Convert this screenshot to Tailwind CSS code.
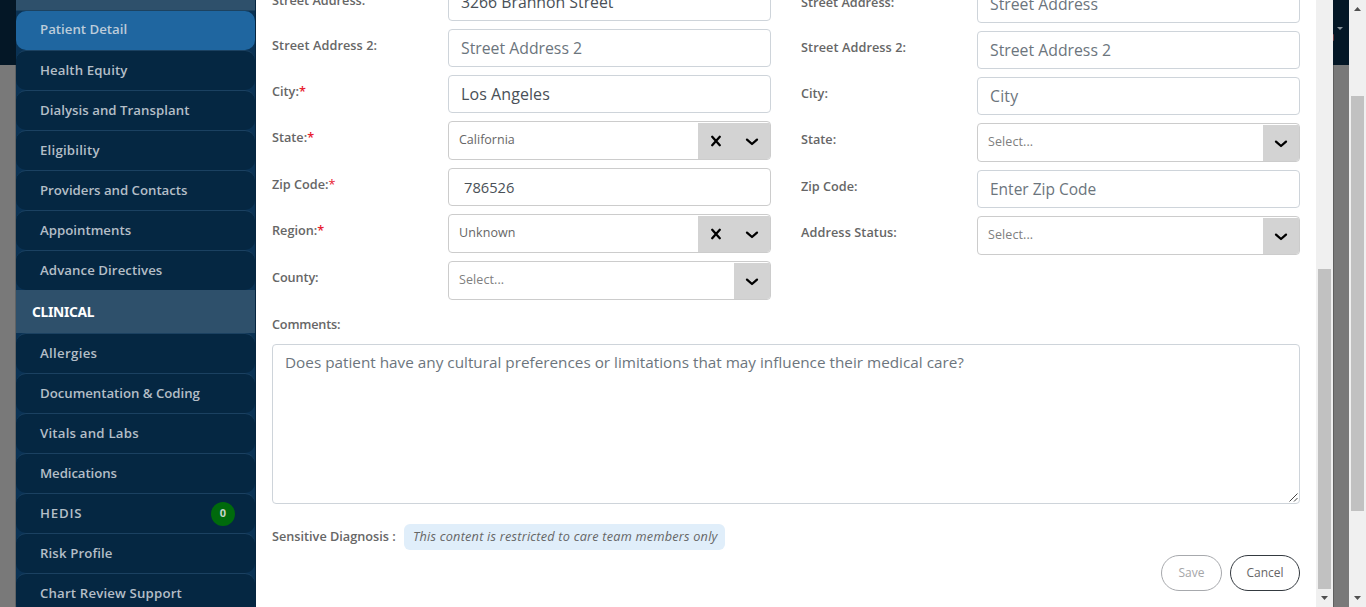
<!DOCTYPE html>
<html lang="en">
<head>
<meta charset="utf-8">
<title>Patient Detail</title>
<script src="https://cdn.jsdelivr.net/npm/@tailwindcss/browser@4"></script>
</head>
<body class="h-[607px] overflow-hidden bg-[#797979] font-['Open_Sans',sans-serif]">
<svg class="hidden">
  <symbol id="chev" viewBox="0 0 14 10"><path d="M2 2.6 7 7 12 2.6" fill="none" stroke="#000" stroke-width="2.3" stroke-linecap="round" stroke-linejoin="round"/></symbol>
  <symbol id="ex" viewBox="0 0 12 12"><path d="M2.2 1.8 9.8 10.2M9.8 1.8 2.2 10.2" fill="none" stroke="#000" stroke-width="2.3" stroke-linecap="round"/></symbol>
  <symbol id="up" viewBox="0 0 7 4"><path d="M0 4 3.5 0 7 4z" fill="#505050"/></symbol>
  <symbol id="down" viewBox="0 0 7 4"><path d="M0 0 3.5 4 7 0z" fill="#505050"/></symbol>
</svg>
<div class="flex h-[607px] w-[1366px]">
  <div class="w-4 shrink-0 border-r border-[#5f6264] bg-[#797979]"><div class="h-[65px] w-4 bg-[#041726]"></div></div>

  <nav class="h-full w-60 shrink-0 overflow-hidden border-r border-[#06253f] bg-[#0a3254] text-[13.25px] font-semibold text-[#b4bec7]">
    <div class="h-[10px] bg-[#2e506b]"></div>
    <div class="border-t border-[#1c4260]"><div class="flex h-[39px] items-center rounded-[10px] bg-[#1f66a0] pb-0.5 pl-6 text-[#bcccda]">Patient Detail</div></div>
    <div class="flex h-10 items-center rounded-[10px] border-t border-[#1b4161] bg-[#052742] pl-6 tracking-[0.1px]">Health Equity</div>
    <div class="flex h-10 items-center rounded-[10px] border-t border-[#1b4161] bg-[#052742] pl-6 tracking-[0.03px]">Dialysis and Transplant</div>
    <div class="flex h-10 items-center rounded-[10px] border-t border-[#1b4161] bg-[#052742] pl-6 tracking-[0.2px]">Eligibility</div>
    <div class="flex h-10 items-center rounded-[10px] border-t border-[#1b4161] bg-[#052742] pl-6 tracking-[-0.03px]">Providers and Contacts</div>
    <div class="flex h-10 items-center rounded-[10px] border-t border-[#1b4161] bg-[#052742] pl-6">Appointments</div>
    <div class="flex h-10 items-center rounded-[10px] border-t border-[#1b4161] bg-[#052742] pl-6 tracking-[0.06px]">Advance Directives</div>
    <div class="flex h-[43px] items-center bg-[#2e506b] pt-0.5 pl-4 font-['Noto_Sans',sans-serif] text-[13.8px] font-bold tracking-[-0.3px] text-white">CLINICAL</div>
    <div class="flex h-10 items-center rounded-[10px] border-t border-[#1b4161] bg-[#052742] pl-6 tracking-[0.3px]">Allergies</div>
    <div class="flex h-10 items-center rounded-[10px] border-t border-[#1b4161] bg-[#052742] pl-6 tracking-[-0.04px]">Documentation &amp; Coding</div>
    <div class="flex h-10 items-center rounded-[10px] border-t border-[#1b4161] bg-[#052742] pl-6 tracking-[0.2px]">Vitals and Labs</div>
    <div class="flex h-10 items-center rounded-[10px] border-t border-[#1b4161] bg-[#052742] pl-6 tracking-[-0.1px]">Medications</div>
    <div class="flex h-10 items-center justify-between rounded-[10px] border-t border-[#1b4161] bg-[#052742] pr-5 pl-6"><span class="tracking-[0.8px]">HEDIS</span><span class="flex size-6 items-center justify-center rounded-full bg-[#006a0c] text-[11px] font-bold text-[#c4d4c6]">0</span></div>
    <div class="flex h-10 items-center rounded-[10px] border-t border-[#1b4161] bg-[#052742] pl-6 tracking-[0.1px]">Risk Profile</div>
    <div class="flex h-10 items-center rounded-[10px] border-t border-[#1b4161] bg-[#052742] pl-6 tracking-[0.15px]">Chart Review Support</div>
  </nav>

  <main class="h-full w-[1060px] shrink-0 overflow-hidden bg-white pr-4 pl-4 text-[12.7px] text-[#666]">
    <div class="grid grid-cols-[499px_499px] gap-x-[30px]">
      <div class="-mt-[17px] flex flex-col gap-2">
        <div class="flex h-[38px] justify-between"><b class="pt-2 font-semibold">Street Address:</b><div class="flex w-[323px] items-center rounded border border-[#ced4da] px-3 pt-px text-[15.8px] text-[#495057]">3266 Brannon Street</div></div>
        <div class="flex h-[38px] justify-between"><b class="pt-[7px] font-semibold tracking-[0.08px]">Street Address 2:</b><div class="flex w-[323px] items-center rounded border border-[#ced4da] px-3 pt-px text-[15.8px] text-[#6c757d]">Street Address 2</div></div>
        <div class="flex h-[38px] justify-between"><b class="pt-[7px] font-semibold">City:<span class="text-[#e8202f]">*</span></b><div class="flex w-[323px] items-center rounded border border-[#ced4da] px-3 text-[16px] tracking-[0.08px] text-[#495057]">Los Angeles</div></div>
        <div class="flex h-[39px] justify-between"><b class="pt-[7px] font-semibold">State:<span class="text-[#e8202f]">*</span></b><div class="flex w-[323px] justify-between overflow-hidden rounded border border-[#ccc] pl-[10px] text-[12.5px]"><span class="self-center">California</span><span class="mt-px flex w-[72px] bg-[#d3d3d3]"><span class="flex flex-1 items-center justify-center"><svg class="size-3"><use href="#ex"/></svg></span><span class="flex flex-1 items-center justify-center pt-px"><svg class="h-[10px] w-[14px]"><use href="#chev"/></svg></span></span></div></div>
        <div class="flex h-[38px] justify-between"><b class="pt-[7px] font-semibold">Zip Code:<span class="font-normal text-[#e8202f]">*</span></b><div class="flex w-[323px] items-center rounded border border-[#ccc] px-[15px] text-[14.7px] text-[#495057]">786526</div></div>
        <div class="flex h-[39px] justify-between"><b class="pt-[7px] font-semibold">Region:<span class="text-[#e8202f]">*</span></b><div class="flex w-[323px] justify-between overflow-hidden rounded border border-[#ccc] pl-[10px] text-[12.5px]"><span class="self-center tracking-[0.1px]">Unknown</span><span class="mt-px flex w-[72px] bg-[#d3d3d3]"><span class="flex flex-1 items-center justify-center"><svg class="size-3"><use href="#ex"/></svg></span><span class="flex flex-1 items-center justify-center pt-px"><svg class="h-[10px] w-[14px]"><use href="#chev"/></svg></span></span></div></div>
        <div class="flex h-[39px] justify-between"><b class="pt-[7px] font-semibold tracking-[-0.1px]">County:</b><div class="flex w-[323px] justify-between overflow-hidden rounded border border-[#ccc] pl-[10px] text-[12.5px] text-[#808080]"><span class="self-center tracking-[0.1px]">Select...</span><span class="mt-px flex w-9 items-center justify-center bg-[#d3d3d3] pt-px"><svg class="h-[10px] w-[14px]"><use href="#chev"/></svg></span></div></div>
      </div>
      <div class="-mt-[15px] flex flex-col gap-2">
        <div class="flex h-[38px] justify-between"><b class="pt-2 font-semibold">Street Address:</b><div class="flex w-[323px] items-center rounded border border-[#ced4da] px-3 pt-px text-[15.8px] text-[#6c757d]">Street Address</div></div>
        <div class="flex h-[38px] justify-between"><b class="pt-[7px] font-semibold tracking-[0.08px]">Street Address 2:</b><div class="flex w-[323px] items-center rounded border border-[#ced4da] px-3 pt-px text-[15.8px] text-[#6c757d]">Street Address 2</div></div>
        <div class="flex h-[38px] justify-between"><b class="pt-[7px] font-semibold">City:</b><div class="flex w-[323px] items-center rounded border border-[#ced4da] px-3 pt-px text-[15.8px] tracking-[0.2px] text-[#6c757d]">City</div></div>
        <div class="flex h-[39px] justify-between"><b class="pt-[7px] font-semibold">State:</b><div class="flex w-[323px] justify-between overflow-hidden rounded border border-[#ccc] pl-[10px] text-[12.5px] text-[#808080]"><span class="self-center tracking-[0.1px]">Select...</span><span class="mt-px flex w-9 items-center justify-center bg-[#d3d3d3] pt-px"><svg class="h-[10px] w-[14px]"><use href="#chev"/></svg></span></div></div>
        <div class="flex h-[38px] justify-between"><b class="pt-[7px] font-semibold">Zip Code:</b><div class="flex w-[323px] items-center rounded border border-[#ced4da] px-3 pt-px text-[15.5px] text-[#6c757d]">Enter Zip Code</div></div>
        <div class="flex h-[39px] justify-between"><b class="pt-[7px] font-semibold tracking-[0.08px]">Address Status:</b><div class="flex w-[323px] justify-between overflow-hidden rounded border border-[#ccc] pl-[10px] text-[12.5px] text-[#808080]"><span class="self-center tracking-[0.1px]">Select...</span><span class="mt-px flex w-9 items-center justify-center bg-[#d3d3d3] pt-px"><svg class="h-[10px] w-[14px]"><use href="#chev"/></svg></span></div></div>
      </div>
    </div>
    <div class="mt-[15px] h-[29px] font-semibold tracking-[-0.2px]">Comments:</div>
    <div class="flex h-[160px] w-[1028px] items-end justify-between rounded border border-[#ced4da] pl-3">
      <span class="self-start pt-[5px] text-[15.3px] leading-6 text-[#6c757d]">Does patient have any cultural preferences or limitations that may influence their medical care?</span>
      <svg class="mr-px mb-px h-[9px] w-[9px]" viewBox="0 0 9 9"><path d="M.5 8.5 8.5.5M5 8.5 8.5 5" stroke="#444" stroke-width="1"/></svg>
    </div>
    <div class="mt-5 flex h-[26px] items-center gap-2"><b class="w-[124px] font-semibold whitespace-nowrap">Sensitive Diagnosis :</b><span class="flex h-[26px] w-[321px] items-center rounded-md bg-[#e0eefa] pl-[9px] tracking-[0.23px] whitespace-nowrap italic">This content is restricted to care team members only</span></div>
    <div class="mt-[5px] flex justify-end gap-2 text-[12px]">
      <span class="flex h-9 w-[61px] items-center justify-center rounded-full border border-[#a7a9ad] text-[#a5a6a8]">Save</span>
      <span class="flex h-9 w-[70px] items-center justify-center rounded-full border border-[#343a40]">Cancel</span>
    </div>
  </main>

  <div class="flex h-full w-[17px] shrink-0 flex-col items-center bg-[#f0f0f0]"><div class="mt-[269px] mr-px h-[320px] w-[13px] bg-[#c1c1c1]"></div><svg class="mt-[7px] h-1 w-[7px]"><use href="#down"/></svg></div>
  <div class="flex h-full w-4 shrink-0 flex-col border-l border-[#5f5f5f] bg-[#797979]"><div class="-ml-px flex h-[65px] items-start justify-between bg-[#041726]"><i class="mt-[34px] h-[7px] w-px rounded-r-full bg-[#6b3c42]"></i><svg class="mt-[27px] mr-[6px] h-[3px] w-[6px]" viewBox="0 0 6 3"><path d="M0 0H6L3 3z" fill="#8a949b"/></svg></div></div>
  <div class="flex h-full w-[17px] shrink-0 flex-col items-center bg-[#f0f0f0]"><svg class="mt-[7px] h-1 w-[7px]"><use href="#up"/></svg><div class="mt-[85px] mr-px h-[415px] w-[13px] bg-[#c1c1c1]"></div><svg class="mt-[85px] h-1 w-[7px]"><use href="#down"/></svg></div>
</div>
</body>
</html>
